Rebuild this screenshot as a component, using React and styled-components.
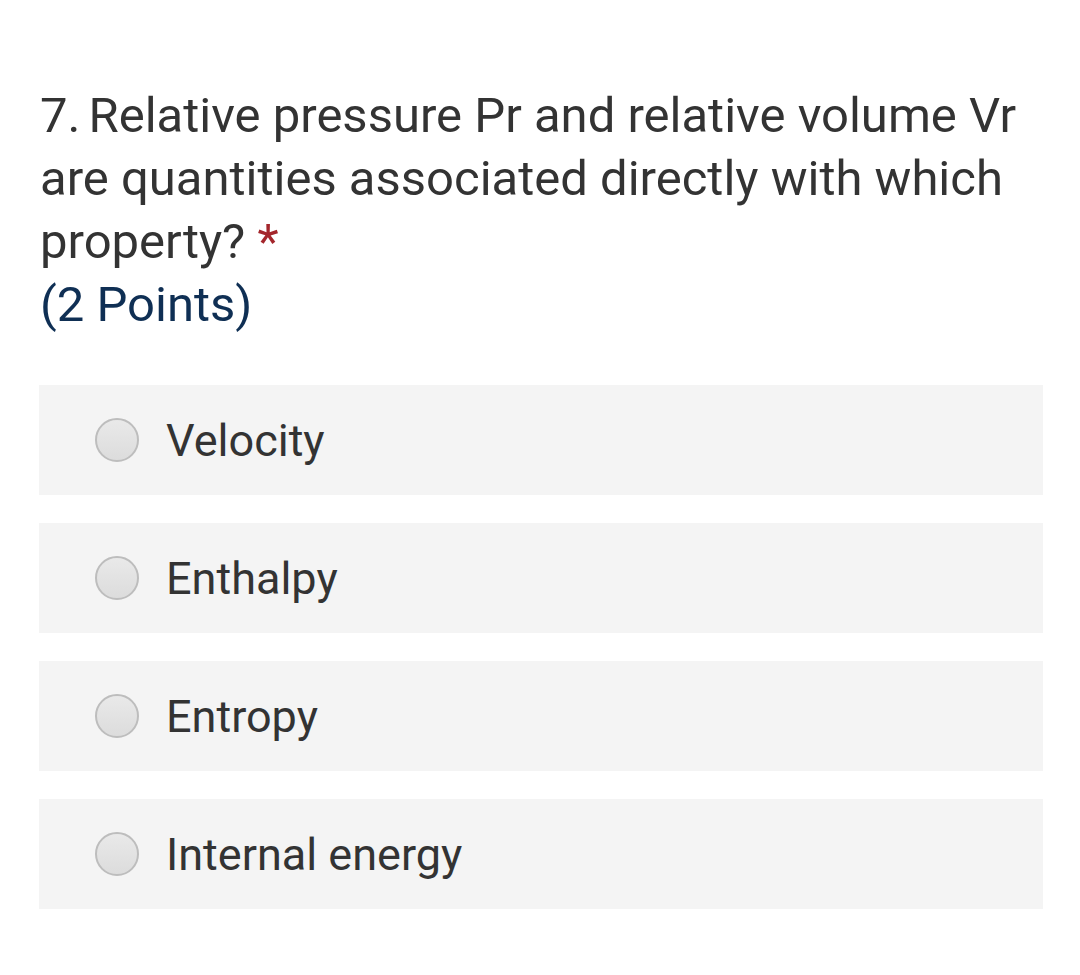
import React from 'react'
import styled, { createGlobalStyle } from 'styled-components'

const Global = createGlobalStyle`
  body {
    margin: 0;
    background: #ffffff;
    font-family: Roboto, "Noto Sans", sans-serif;
  }
`

const options = ['Velocity', 'Enthalpy', 'Entropy', 'Internal energy']

function App() {
  return (
    <Page>
      <Global />
      <Question>
        <Title>
          <Num>7.</Num>Relative pressure Pr and relative volume Vr are quantities associated directly with which property?{' '}
          <Star>*</Star>
        </Title>
        <Points>(2 Points)</Points>
      </Question>
      <Options>
        {options.map((o) => (
          <Option key={o}>
            <Radio type="radio" name="q7" />
            <Label>{o}</Label>
          </Option>
        ))}
      </Options>
    </Page>
  )
}

export default App

const Page = styled.div`
  padding: 84px 37px 40px 39px;
`

const Question = styled.div`
  padding-left: 1px;
  color: #333333;
  font-size: 49px;
  line-height: 63px;
`

const Title = styled.div``

const Num = styled.span`
  margin-right: 8px;
`

const Star = styled.span`
  color: #a4262c;
`

const Points = styled.div`
  color: #0f2f54;
`

const Options = styled.div`
  margin-top: 49px;
  display: flex;
  flex-direction: column;
  gap: 28px;
`

const Option = styled.label`
  display: flex;
  align-items: center;
  height: 110px;
  background: #f4f4f4;
  padding-left: 56px;
`

const Radio = styled.input`
  appearance: none;
  margin: 0;
  width: 44px;
  height: 44px;
  border-radius: 50%;
  border: 2px solid #bdbdbd;
  background: linear-gradient(#e9e9e9, #dcdcdc);
  box-sizing: border-box;
`

const Label = styled.span`
  margin-left: 27px;
  font-size: 45px;
  color: #333333;
`
